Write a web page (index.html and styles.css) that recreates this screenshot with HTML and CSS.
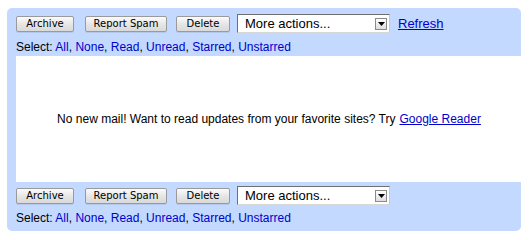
FILE: index.html
```html
<!DOCTYPE html>
<html>
<head>
<meta charset="utf-8">
<link rel="stylesheet" href="styles.css">
</head>
<body>
<div class="page">
  <div class="bar bar-top">
    <div class="actions">
      <button class="btn btn-archive">Archive</button>
      <button class="btn btn-spam">Report Spam</button>
      <button class="btn btn-delete">Delete</button>
      <div class="select"><span class="select-label">More actions...</span><span class="select-arrow"><svg width="7" height="4" viewBox="0 0 7 4"><path d="M0 0H7L3.5 4Z" fill="#000"/></svg></span></div>
      <a class="refresh" href="#">Refresh</a>
    </div>
    <div class="selrow selrow-top">Select: <span class="l">All</span>, <span class="l">None</span>, <span class="l">Read</span>, <span class="l">Unread</span>, <span class="l">Starred</span>, <span class="l">Unstarred</span></div>
  </div>
  <div class="content">
    <div class="gutter"></div>
    <div class="msg">No new mail! Want to read updates from your favorite sites? Try <a href="#">Google Reader</a></div>
  </div>
  <div class="bar bar-bottom">
    <div class="actions">
      <button class="btn btn-archive">Archive</button>
      <button class="btn btn-spam">Report Spam</button>
      <button class="btn btn-delete">Delete</button>
      <div class="select"><span class="select-label">More actions...</span><span class="select-arrow"><svg width="7" height="4" viewBox="0 0 7 4"><path d="M0 0H7L3.5 4Z" fill="#000"/></svg></span></div>
    </div>
    <div class="selrow">Select: <span class="l">All</span>, <span class="l">None</span>, <span class="l">Read</span>, <span class="l">Unread</span>, <span class="l">Starred</span>, <span class="l">Unstarred</span></div>
  </div>
</div>
</body>
</html>
```

FILE: styles.css
```css
html, body {
  margin: 0;
  padding: 0;
  background: #fff;
}
body {
  font-family: "Liberation Sans", Arial, sans-serif;
  font-size: 12px;
  color: #000;
}
.page {
  padding-top: 8px;
  padding-left: 7px;
}
.bar {
  background: #c3d9ff;
  width: 514px;
}
.bar-top {
  border-radius: 5px 5px 0 0;
  height: 48px;
}
.bar-bottom {
  border-radius: 0 0 5px 5px;
  height: 49px;
}
.actions {
  display: flex;
  align-items: center;
  height: 19px;
  padding-left: 9px;
  padding-top: 6px;
}
.bar-bottom .actions {
  padding-top: 4px;
}
.btn {
  box-sizing: border-box;
  height: 16px;
  margin: 0;
  margin-top: 1px;
  padding: 0;
  border: 1px solid #9a9a9a;
  border-radius: 2px;
  background: linear-gradient(#fbfbfb, #e6e6e6 50%, #d9d9d9);
  box-shadow: 0 1px 0 rgba(0,0,0,0.08);
  font-family: "DejaVu Sans", sans-serif;
  font-size: 10px;
  color: #000;
  line-height: 14px;
}
.btn-archive { width: 58px; }
.btn-spam { width: 82px; margin-left: 11px; }
.btn-delete { width: 54px; margin-left: 9px; }
.select {
  box-sizing: border-box;
  display: flex;
  align-items: center;
  justify-content: space-between;
  width: 153px;
  height: 19px;
  margin-left: 7px;
  background: #fff;
  border-top: 1px solid #6f6f6f;
  border-left: 1px solid #6f6f6f;
  border-right: 1px solid #c8c8c8;
  border-bottom: 1px solid #d8d8d8;
  padding-left: 7px;
  padding-right: 2px;
}
.select-label {
  font-size: 13px;
  color: #000;
}
.select-arrow {
  box-sizing: border-box;
  display: flex;
  align-items: center;
  justify-content: center;
  width: 12px;
  height: 12px;
  border: 1px solid #8a8a8a;
  background: linear-gradient(#fff, #dedede);
}
.refresh {
  margin-left: 8px;
  font-size: 13px;
  color: #0000cc;
  text-decoration: underline;
}
.selrow {
  margin-top: 6px;
  padding-left: 9px;
  line-height: 14px;
  font-size: 12px;
  color: #000;
}
.selrow-top {
  position: relative;
  margin-top: 7px;
}
.selrow-top::before {
  content: "";
  position: absolute;
  left: -16px;
  top: -2px;
  width: 7px;
  height: 24px;
  background: #c3d9ff;
}
.l {
  color: #0000cc;
}
.content {
  display: flex;
  height: 126px;
}
.gutter {
  width: 9px;
  background: #c3d9ff;
  flex: none;
}
.msg {
  flex: 1;
  display: flex;
  align-items: center;
  justify-content: center;
  padding-right: 7px;
  font-size: 12px;
}
.msg a {
  color: #0000cc;
  text-decoration: underline;
  margin-left: 4px;
}
```
